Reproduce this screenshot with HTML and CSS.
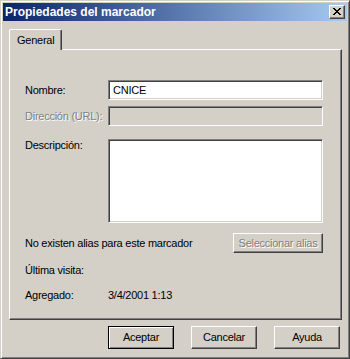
FILE: index.html
```html
<!DOCTYPE html>
<html>
<head>
    <title>Propiedades del marcador</title>
    <link rel="stylesheet" href="styles.css">
</head>
<body>
    <div class="window">
        <div class="title-bar">
            <span class="title">Propiedades del marcador</span>
            <div class="close-btn">
                <svg width="8" height="7" viewBox="0 0 8 7" shape-rendering="crispEdges">
                    <path fill="#000" d="M0 0h2v1H0z M6 0h2v1H6z M1 1h2v1H1z M5 1h2v1H5z M2 2h4v1H2z M3 3h2v1H3z M2 4h4v1H2z M1 5h2v1H1z M5 5h2v1H5z M0 6h2v1H0z M6 6h2v1H6z"/>
                </svg>
            </div>
        </div>

        <div class="dialog-body">
            <div class="tabs">
                <div class="tab active">General</div>
            </div>

            <div class="panel">
                <div class="row first">
                    <span class="label">Nombre:</span>
                    <div class="field">CNICE</div>
                </div>
                <div class="row second">
                    <span class="label disabled">Dirección (URL):</span>
                    <div class="field readonly"></div>
                </div>
                <div class="row third">
                    <span class="label top">Descripción:</span>
                    <div class="field area"></div>
                </div>
                <div class="row alias-row">
                    <span>No existen alias para este marcador</span>
                    <div class="btn disabled-btn">Seleccionar alias</div>
                </div>
                <div class="row info">
                    <span class="label">Última visita:</span>
                </div>
                <div class="row info">
                    <span class="label">Agregado:</span>
                    <span>3/4/2001 1:13</span>
                </div>
            </div>

            <div class="buttons">
                <div class="btn default">Aceptar</div>
                <div class="btn">Cancelar</div>
                <div class="btn">Ayuda</div>
            </div>
        </div>
    </div>
</body>
</html>
```

FILE: styles.css
```css
body {
    margin: 0;
    padding: 0;
    font-family: "Liberation Sans", Arial, sans-serif;
    font-size: 11px;
    letter-spacing: -0.25px;
    line-height: 13px;
    color: #000;
    background-color: #d4d0c8;
}
.window {
    width: 350px;
    height: 359px;
    box-sizing: border-box;
    border: 1px solid;
    border-color: #d4d0c8 #404040 #404040 #d4d0c8;
    box-shadow: inset 1px 1px #fff, inset -1px -1px #808080;
    padding: 2px;
    background-color: #d4d0c8;
}
.title-bar {
    height: 18px;
    display: flex;
    align-items: center;
    justify-content: space-between;
    padding: 0 2px 0 2px;
    background: linear-gradient(to right, #0a246a, #a6caf0);
}
.title {
    color: white;
    font-weight: bold;
    font-size: 12px;
    letter-spacing: 0;
}
.close-btn {
    width: 16px;
    height: 14px;
    box-sizing: border-box;
    border: 1px solid;
    border-color: #fff #404040 #404040 #fff;
    box-shadow: inset -1px -1px #808080;
    background-color: #d4d0c8;
    display: flex;
    align-items: center;
    justify-content: center;
    padding: 0 1px 1px 0;
}
.close-btn svg {
    display: block;
}
.dialog-body {
    padding: 8px 7px 0 6px;
}
.tabs {
    display: flex;
}
.tab {
    position: relative;
    z-index: 1;
    width: 53px;
    height: 21px;
    box-sizing: border-box;
    margin-bottom: -1px;
    padding-left: 7px;
    display: flex;
    align-items: center;
    border: 1px solid;
    border-color: #fff #404040 transparent #fff;
    border-bottom: none;
    border-radius: 2px 2px 0 0;
    box-shadow: inset -1px 0 #808080;
    background-color: #d4d0c8;
}
.panel {
    width: 333px;
    height: 271px;
    box-sizing: border-box;
    border: 1px solid;
    border-color: #fff #404040 #404040 #fff;
    box-shadow: inset -1px -1px #808080;
    padding: 30px 18px 0 15px;
}
.row {
    display: flex;
    align-items: center;
}
.row.first {
    margin-bottom: 6px;
}
.row.second {
    margin-bottom: 13px;
}
.row.third {
    align-items: flex-start;
    margin-bottom: 10px;
}
.row.info {
    margin-top: 11px;
}
.row.info + .row.info {
    margin-top: 12px;
}
.label {
    width: 83px;
    flex-shrink: 0;
    white-space: nowrap;
}
.disabled,
.disabled-btn {
    color: #808080;
    text-shadow: 1px 1px #fff;
}
.field {
    flex: 1;
    height: 20px;
    box-sizing: border-box;
    border: 1px solid;
    border-color: #808080 #fff #fff #808080;
    box-shadow: inset 1px 1px #404040, inset -1px -1px #d4d0c8;
    background-color: #fff;
    padding: 3px 0 0 4px;
}
.field.readonly {
    background-color: #d4d0c8;
}
.field.area {
    height: 84px;
}
.alias-row {
    justify-content: space-between;
}
.btn {
    box-sizing: border-box;
    display: flex;
    align-items: center;
    justify-content: center;
    border: 1px solid;
    border-color: #fff #404040 #404040 #fff;
    box-shadow: inset -1px -1px #808080;
    background-color: #d4d0c8;
}
.alias-row .btn {
    width: 90px;
    height: 20px;
}
.buttons {
    display: flex;
    justify-content: flex-end;
    gap: 17px;
    margin-top: 6px;
    padding-right: 0;
}
.buttons .btn {
    width: 66px;
    height: 23px;
}
.btn.default {
    border-color: #000;
    box-shadow: inset 1px 1px #fff, inset -1px -1px #808080;
}
```
